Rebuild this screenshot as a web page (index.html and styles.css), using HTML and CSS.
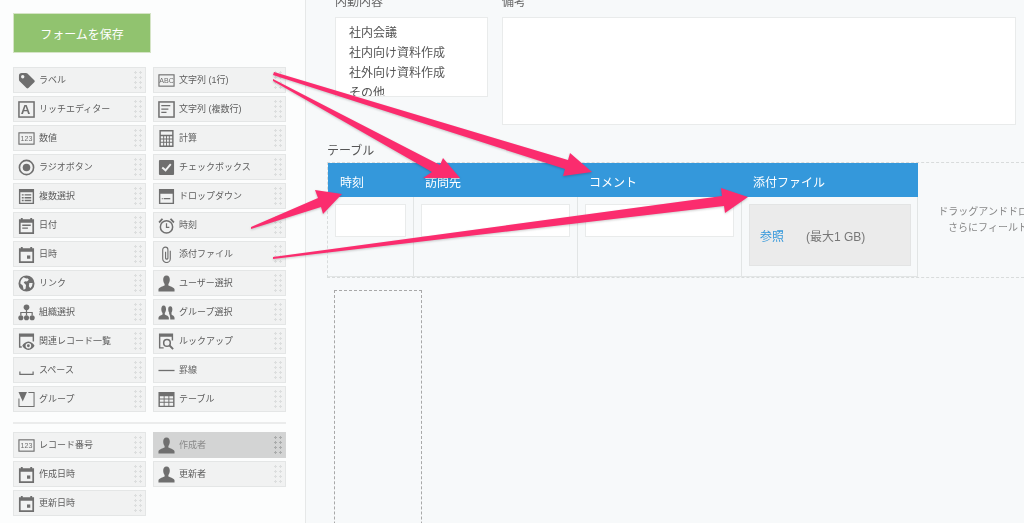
FILE: index.html
```html
<!DOCTYPE html>
<html lang="ja">

    <head>
        <meta charset="UTF-8" />
        <meta name="viewport" content="width=device-width, initial-scale=1.0" />
        <title>フォームの設定</title>
        <link rel="stylesheet" href="styles.css">
    </head>

    <body>
        <!-- アイコン定義 -->
        <svg class="icon-defs" aria-hidden="true">
            <symbol id="i-tag" viewBox="0 0 18 18"><path fill-rule="evenodd" d="M1 4Q1 1 4 1H8.500Q9.500 1 10 1.500L17.500 9Q18 10 17.500 10.500L11 17Q10 18 9 17L1.500 9.500Q1 9 1 8ZM5 3.200A1.800 1.800 0 1 0 5 6.800A1.800 1.800 0 1 0 5 3.200Z"/></symbol>
            <symbol id="i-abc" viewBox="0 0 18 18"><rect x="1" y="3" width="16" height="12" fill="none" stroke="currentColor" stroke-width="1.200"/><text x="9" y="11.800" class="icon-text">ABC</text></symbol>
            <symbol id="i-num" viewBox="0 0 18 18"><rect x="1" y="3" width="16" height="12" fill="none" stroke="currentColor" stroke-width="1.200"/><text x="9" y="11.800" class="icon-text">123</text></symbol>
            <symbol id="i-rich" viewBox="0 0 18 18"><rect x="1" y="1" width="16" height="16" fill="none" stroke="currentColor" stroke-width="1.600"/><text x="8" y="14" class="icon-letter">A</text></symbol>
            <symbol id="i-lines" viewBox="0 0 18 18"><rect x="1" y="1" width="16" height="16" fill="none" stroke="currentColor" stroke-width="1.600"/><path fill="none" stroke="currentColor" stroke-width="1.300" d="M3.500 5H13M3.500 8.500H11M3.500 12H9"/></symbol>
            <symbol id="i-calc" viewBox="0 0 18 18"><path fill-rule="evenodd" d="M1.500 0H16.500V18H1.500ZM3 1.500V5H15V1.500ZM3 6.500V9H5.500V6.500ZM6.500 6.500V9H8.500V6.500ZM9.500 6.500V9H11.500V6.500ZM12.500 6.500V9H15V6.500ZM3 10V12.500H5.500V10ZM6.500 10V12.500H8.500V10ZM9.500 10V12.500H11.500V10ZM12.500 10V12.500H15V10ZM3 13.500V16.500H5.500V13.500ZM6.500 13.500V16.500H8.500V13.500ZM9.500 13.500V16.500H11.500V13.500ZM12.500 13.500V16.500H15V13.500Z"/></symbol>
            <symbol id="i-radio" viewBox="0 0 18 18"><circle cx="9" cy="9" r="7.500" fill="none" stroke="currentColor" stroke-width="1.700"/><circle cx="9" cy="9" r="4"/></symbol>
            <symbol id="i-check" viewBox="0 0 18 18"><rect x="1" y="1" width="16" height="16" rx="1"/><path fill="none" stroke="#f1f2f2" stroke-width="2" d="M4.500 9L8 12L13.500 5.500"/></symbol>
            <symbol id="i-multi" viewBox="0 0 18 18"><path fill-rule="evenodd" d="M1 1H17V17H1ZM2.500 4.500V15.500H15.500V4.500Z"/><path d="M4 6.500H6V8H4ZM7 6.500H14V8H7ZM4 9.500H6V11H4ZM7 9.500H14V11H7ZM4 12.500H6V14H4ZM7 12.500H14V14H7Z"/></symbol>
            <symbol id="i-drop" viewBox="0 0 18 18"><path fill-rule="evenodd" d="M1 1H17V17H1ZM2.500 6V15.500H15.500V6Z"/><path d="M6 10.500H13V11.800H6ZM4 10.500H5V11.800H4Z"/></symbol>
            <symbol id="i-date" viewBox="0 0 18 18"><path fill-rule="evenodd" d="M3 1H5V2.500H13V1H15V2.500H17V18H1V2.500H3ZM2.800 6V16.200H15.200V6Z"/><path d="M4.500 8H13.500V9.500H4.500ZM4.500 11H10.500V12.500H4.500Z"/></symbol>
            <symbol id="i-datetime" viewBox="0 0 18 18"><path fill-rule="evenodd" d="M3 1H5V2.500H13V1H15V2.500H17V18H1V2.500H3ZM2.800 6V16.200H15.200V6Z"/><path d="M9.500 10H13V13.500H9.500Z"/></symbol>
            <symbol id="i-clock" viewBox="0 0 18 18"><circle cx="9" cy="10.500" r="6.500" fill="none" stroke="currentColor" stroke-width="1.600"/><path fill="none" stroke="currentColor" stroke-width="1.300" d="M9 6.500V11H12"/><path d="M0.500 5L4 1.200L5.500 2.500L1.800 6.500ZM17.500 5L14 1.200L12.500 2.500L16.200 6.500Z"/></symbol>
            <symbol id="i-clip" viewBox="0 0 18 18"><path fill="none" stroke="currentColor" stroke-width="1.200" d="M13 5V13.500A4 4 0 0 1 5 13.500V4A2.700 2.700 0 0 1 10.500 4V13A1.300 1.300 0 0 1 8 13V6"/></symbol>
            <symbol id="i-globe" viewBox="0 0 18 18"><path fill-rule="evenodd" d="M9 .500A8.500 8.500 0 1 0 9 17.500A8.500 8.500 0 1 0 9 .500ZM6 2.500Q8 4 10 3.500L11.500 5L9.500 7L7.500 6.500L6 8L8.500 10.500L8 14.500L6 15.500L5 11L2.500 9Q2.500 5 6 2.500ZM12 8.500L15.500 8.500Q15.500 12 13 14L11.500 12Z"/></symbol>
            <symbol id="i-user" viewBox="0 0 18 18"><path d="M9 0.500C6.500 0.500 5.500 2.500 5.500 5C5.500 7 6.300 8.500 7 9.500V11C5 12 1 12.800 0.500 15V17.500H17.500V15C17 12.800 13 12 11 11V9.500C11.700 8.500 12.500 7 12.500 5C12.500 2.500 11.500 0.500 9 0.500Z"/></symbol>
            <symbol id="i-org" viewBox="0 0 18 18"><circle cx="9" cy="3.500" r="3"/><circle cx="3" cy="14.500" r="2.700"/><circle cx="9" cy="14.500" r="2.700"/><circle cx="15" cy="14.500" r="2.700"/><path fill="none" stroke="currentColor" stroke-width="1.300" d="M9 6V12M3 12V9H15V12"/></symbol>
            <symbol id="i-group" viewBox="0 0 18 18"><path d="M6 1.500C4 1.500 3.500 3.500 3.500 5.500C3.500 7 4 8.500 4.800 9.500V11C3 12 .5 12.500 .5 14.500V16.500H11.500V14.500C11.500 12.500 9 12 7.200 11V9.500C8 8.500 8.500 7 8.500 5.500C8.500 3.500 8 1.500 6 1.500Z"/><path d="M13 2.500C11.500 2.500 10.800 3.800 10.800 5.500C10.800 7 11.300 8.300 11.800 9V10.500C12.500 11.500 13 13 13 16.500H17.500V14.500C17.500 12.500 15.500 12 14.300 11V9C14.800 8.300 15.200 7 15.200 5.500C15.200 3.800 14.500 2.500 13 2.500Z"/></symbol>
            <symbol id="i-related" viewBox="0 0 18 18"><path fill-rule="evenodd" d="M1 0.500H17V9H15.500V4H2.500V14H4V15.500H1Z"/><path fill-rule="evenodd" d="M11 9C8 9 5.500 11.500 4.500 13.500C5.500 15.500 8 18 11 18C14 18 16.500 15.500 17.500 13.500C16.500 11.500 14 9 11 9ZM11 10.500A3 3 0 1 1 11 16.500A3 3 0 1 1 11 10.500Z"/><circle cx="11" cy="13.500" r="1.500"/></symbol>
            <symbol id="i-lookup" viewBox="0 0 18 18"><path fill-rule="evenodd" d="M1 0.500H16V8H14.500V4H2.500V15H6V16.500H1Z"/><circle cx="9.500" cy="10.500" r="3.500" fill="none" stroke="currentColor" stroke-width="1.600"/><path fill="none" stroke="currentColor" stroke-width="2" d="M12 13L16 17"/></symbol>
            <symbol id="i-space" viewBox="0 0 18 18"><path fill="none" stroke="currentColor" stroke-width="1.300" d="M2 10V13H16V10"/></symbol>
            <symbol id="i-rule" viewBox="0 0 18 18"><path fill="none" stroke="currentColor" stroke-width="1.400" d="M0.500 9H17.500"/></symbol>
            <symbol id="i-box" viewBox="0 0 18 18"><path fill="none" stroke="currentColor" stroke-width="1.100" d="M11 1.500H17V16.500H1V8"/><path d="M0.500 1H9.500L5 11Z"/></symbol>
            <symbol id="i-table" viewBox="0 0 18 18"><path fill-rule="evenodd" d="M0.500 1H17.500V17H0.500ZM2 5.500V8H6V5.500ZM7 5.500V8H11V5.500ZM12 5.500V8H16V5.500ZM2 9V11.500H6V9ZM7 9V11.500H11V9ZM12 9V11.500H16V9ZM2 12.500V15.500H6V12.500ZM7 12.500V15.500H11V12.500ZM12 12.500V15.500H16V12.500Z"/></symbol>
        </svg>

        <div class="page">
            <!-- フィールド一覧 -->
            <aside class="palette">
                <button class="save-button">フォームを保存</button>
                <div class="parts">
                    <div class="part"><svg class="part-icon"><use href="#i-tag"/></svg><span>ラベル</span><i class="grip"></i></div>
                    <div class="part"><svg class="part-icon"><use href="#i-abc"/></svg><span>文字列 (1行)</span><i class="grip"></i></div>
                    <div class="part"><svg class="part-icon"><use href="#i-rich"/></svg><span>リッチエディター</span><i class="grip"></i></div>
                    <div class="part"><svg class="part-icon"><use href="#i-lines"/></svg><span>文字列 (複数行)</span><i class="grip"></i></div>
                    <div class="part"><svg class="part-icon"><use href="#i-num"/></svg><span>数値</span><i class="grip"></i></div>
                    <div class="part"><svg class="part-icon"><use href="#i-calc"/></svg><span>計算</span><i class="grip"></i></div>
                    <div class="part"><svg class="part-icon"><use href="#i-radio"/></svg><span>ラジオボタン</span><i class="grip"></i></div>
                    <div class="part"><svg class="part-icon"><use href="#i-check"/></svg><span>チェックボックス</span><i class="grip"></i></div>
                    <div class="part"><svg class="part-icon"><use href="#i-multi"/></svg><span>複数選択</span><i class="grip"></i></div>
                    <div class="part"><svg class="part-icon"><use href="#i-drop"/></svg><span>ドロップダウン</span><i class="grip"></i></div>
                    <div class="part"><svg class="part-icon"><use href="#i-date"/></svg><span>日付</span><i class="grip"></i></div>
                    <div class="part"><svg class="part-icon"><use href="#i-clock"/></svg><span>時刻</span><i class="grip"></i></div>
                    <div class="part"><svg class="part-icon"><use href="#i-datetime"/></svg><span>日時</span><i class="grip"></i></div>
                    <div class="part"><svg class="part-icon"><use href="#i-clip"/></svg><span>添付ファイル</span><i class="grip"></i></div>
                    <div class="part"><svg class="part-icon"><use href="#i-globe"/></svg><span>リンク</span><i class="grip"></i></div>
                    <div class="part"><svg class="part-icon"><use href="#i-user"/></svg><span>ユーザー選択</span><i class="grip"></i></div>
                    <div class="part"><svg class="part-icon"><use href="#i-org"/></svg><span>組織選択</span><i class="grip"></i></div>
                    <div class="part"><svg class="part-icon"><use href="#i-group"/></svg><span>グループ選択</span><i class="grip"></i></div>
                    <div class="part"><svg class="part-icon"><use href="#i-related"/></svg><span>関連レコード一覧</span><i class="grip"></i></div>
                    <div class="part"><svg class="part-icon"><use href="#i-lookup"/></svg><span>ルックアップ</span><i class="grip"></i></div>
                    <div class="part"><svg class="part-icon"><use href="#i-space"/></svg><span>スペース</span><i class="grip"></i></div>
                    <div class="part"><svg class="part-icon"><use href="#i-rule"/></svg><span>罫線</span><i class="grip"></i></div>
                    <div class="part"><svg class="part-icon"><use href="#i-box"/></svg><span>グループ</span><i class="grip"></i></div>
                    <div class="part"><svg class="part-icon"><use href="#i-table"/></svg><span>テーブル</span><i class="grip"></i></div>
                </div>
                <hr class="palette-rule">
                <div class="parts">
                    <div class="part"><svg class="part-icon"><use href="#i-num"/></svg><span>レコード番号</span><i class="grip"></i></div>
                    <div class="part part-used"><svg class="part-icon"><use href="#i-user"/></svg><span>作成者</span><i class="grip"></i></div>
                    <div class="part"><svg class="part-icon"><use href="#i-datetime"/></svg><span>作成日時</span><i class="grip"></i></div>
                    <div class="part"><svg class="part-icon"><use href="#i-user"/></svg><span>更新者</span><i class="grip"></i></div>
                    <div class="part"><svg class="part-icon"><use href="#i-datetime"/></svg><span>更新日時</span><i class="grip"></i></div>
                </div>
            </aside>

            <!-- フォーム編集エリア -->
            <main class="canvas">
                <div class="field-row">
                    <div>
                        <div class="field-label">内勤内容</div>
                        <div class="choice-list">
                            <div>社内会議</div>
                            <div>社内向け資料作成</div>
                            <div>社外向け資料作成</div>
                            <div>その他</div>
                        </div>
                    </div>
                    <div>
                        <div class="field-label">備考</div>
                        <div class="memo-box"></div>
                    </div>
                </div>

                <div class="table-title">テーブル</div>
                <div class="table-zone">
                    <div class="table-grid">
                        <div class="table-head">時刻</div>
                        <div class="table-head">訪問先</div>
                        <div class="table-head">コメント</div>
                        <div class="table-head">添付ファイル</div>
                        <div class="table-cell"><div class="text-input"></div></div>
                        <div class="table-cell"><div class="text-input"></div></div>
                        <div class="table-cell"><div class="text-input"></div></div>
                        <div class="table-cell">
                            <div class="file-box"><span class="file-link">参照</span><span>(最大1 GB)</span></div>
                        </div>
                    </div>
                    <div class="drop-hint">
                        <div class="drop-hint-text">ドラッグアンドドロップして<br>さらにフィールドを追加</div>
                    </div>
                </div>

                <div class="empty-slot"></div>
            </main>
        </div>

        <!-- 説明用の矢印 -->
        <svg class="arrows" viewBox="0 0 1024 523">
            <polygon points="274,72 568,160 570,153 592,172 563,176 565,169 273,75"/>
            <polygon points="273,79 440,165 443,158 460,178 423,178 432,172 273,81"/>
            <polygon points="251,227 318,198 315,190 342,194 323,214 321,207 251,229"/>
            <polygon points="273,257 722,196 721,188 748,197 725,213 724,206 273,259"/>
        </svg>
    </body>

</html>
```

FILE: styles.css
```css
* {
    box-sizing: border-box;
}

html,
body {
    margin: 0;
    height: 523px;
    overflow: hidden;
}

body {
    position: relative;
    background: #fcfdfd;
    color: #555;
    font-family: 'Liberation Sans', 'Noto Sans CJK JP', sans-serif;
}

.icon-defs {
    display: none;
}

.icon-text {
    font-family: 'Liberation Sans', sans-serif;
    font-size: 7.5px;
    text-anchor: middle;
    fill: currentColor;
}

.icon-letter {
    font-family: 'Liberation Sans', sans-serif;
    font-size: 14px;
    font-weight: bold;
    text-anchor: middle;
    fill: currentColor;
}

.page {
    display: flex;
    height: 523px;
    filter: blur(0.35px);
}

/* 左側のパレット */
.palette {
    width: 306px;
    flex-shrink: 0;
    padding: 13px 19px 0 13px;
    border-right: 1px solid #e6e8e8;
}

.save-button {
    display: block;
    width: 138px;
    height: 40px;
    margin-bottom: 14px;
    padding: 0;
    background: #91c36f;
    border: 1px solid #d5e4c6;
    color: #fff;
    font-family: inherit;
    font-size: 12px;
}

.parts {
    display: grid;
    grid-template-columns: 133px 133px;
    grid-auto-rows: 26px;
    gap: 3px 7px;
}

.part {
    display: flex;
    align-items: center;
    gap: 4px;
    padding-left: 4px;
    background: #f1f2f2;
    border: 1px solid #e4e6e6;
    font-size: 9px;
    color: #5c5c5c;
    white-space: nowrap;
}

.part span {
    margin-bottom: 2px;
}

.part-icon {
    width: 17px;
    height: 17px;
    flex-shrink: 0;
    color: #6f6f6f;
    fill: currentColor;
}

.grip {
    width: 10px;
    height: 20px;
    margin-left: auto;
    margin-right: 2px;
    background-image: radial-gradient(circle, #dcdede 1px, transparent 1.2px);
    background-size: 5px 5px;
}

.part-used {
    background: #d3d4d4;
    border-color: #d3d4d4;
    color: #8a8a8a;
}

.part-used .grip {
    background-image: radial-gradient(circle, #a9abab 1px, transparent 1.2px);
}

.palette-rule {
    height: 2px;
    margin: 10px 0 8px;
    background: #ebecec;
    border: 0;
}

/* 右側の編集エリア */
.canvas {
    flex: 1;
    min-width: 0;
    padding-left: 21px;
    background: #f7f9fa;
}

.field-row {
    display: flex;
    gap: 14px;
    margin-top: -5px;
    margin-left: 8px;
}

.field-label {
    height: 22px;
    font-size: 12px;
    line-height: 14px;
    color: #666;
}

.choice-list {
    width: 153px;
    height: 80px;
    padding: 5px 0 0 13px;
    overflow: hidden;
    background: #fff;
    border: 1px solid #e9ebeb;
    font-size: 12px;
    line-height: 20px;
}

.memo-box {
    width: 514px;
    height: 108px;
    background: #fff;
    border: 1px solid #e9ebeb;
}

.table-title {
    margin-top: 17px;
    height: 20px;
    font-size: 12px;
    line-height: 18px;
    color: #555;
}

.table-zone {
    display: flex;
    height: 116px;
    border-top: 1px dashed #d9dcdc;
    border-bottom: 1px dashed #d9dcdc;
    border-left: 1px dashed #d9dcdc;
}

.table-grid {
    display: grid;
    grid-template-columns: 85px 164px 164px 177px;
    grid-template-rows: 34px 80px;
    width: 590px;
    flex-shrink: 0;
    border-right: 1px solid #e2e5e5;
}

.table-head {
    padding: 11px 0 0 12px;
    background: #3498db;
    color: #fff;
    font-size: 12px;
    line-height: 18px;
}

.table-cell {
    padding: 7px;
    border-left: 1px solid #e2e5e5;
    border-bottom: 1px solid #e2e5e5;
}

.table-cell:nth-child(5) {
    border-left: 0;
}

.text-input {
    height: 33px;
    background: #fff;
    border: 1px solid #e9ebeb;
}

.file-box {
    display: flex;
    align-items: center;
    gap: 22px;
    height: 62px;
    padding-left: 10px;
    background: #ebebeb;
    border: 1px solid #e3e4e4;
    color: #777;
    font-size: 12px;
}

.file-link {
    color: #3498db;
}

.drop-hint {
    flex: 1;
    display: flex;
    align-items: center;
    padding-left: 20px;
    overflow: hidden;
}

.drop-hint-text {
    width: 130px;
    flex-shrink: 0;
    color: #888;
    font-size: 10px;
    line-height: 16px;
    text-align: center;
    white-space: nowrap;
}

.empty-slot {
    width: 88px;
    height: 300px;
    margin-top: 12px;
    margin-left: 7px;
    border: 1px dashed #a8a8a8;
}

/* 説明用の矢印は画面全体に重ねる */
.arrows {
    position: absolute;
    top: 0;
    left: 0;
    width: 1024px;
    height: 523px;
    fill: #fb2c6e;
    filter: drop-shadow(0 1px 1px rgba(0, 0, 0, 0.2));
}
```
